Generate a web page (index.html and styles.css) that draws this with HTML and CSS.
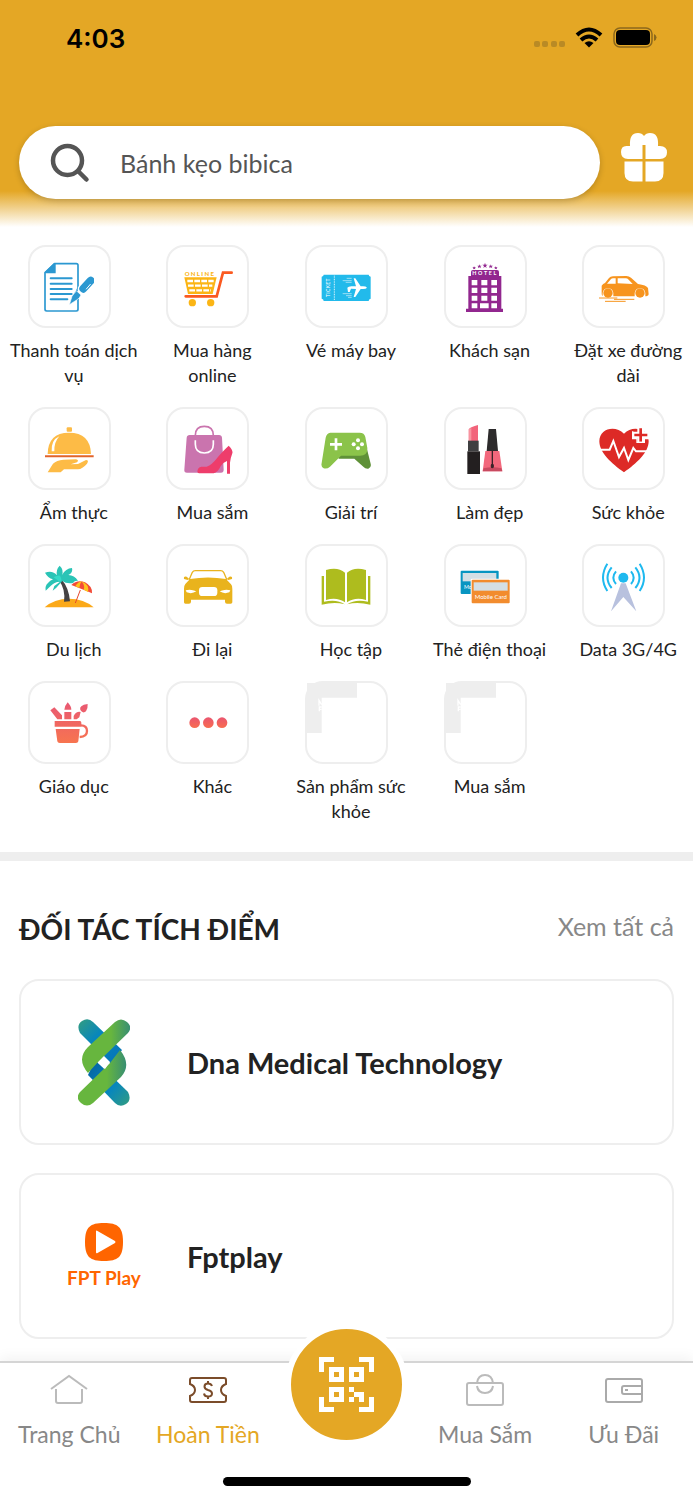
FILE: index.html
```html
<!DOCTYPE html>
<html lang="vi">

<head>
    <meta charset="UTF-8">
    <meta name="viewport" content="width=device-width, initial-scale=1.0">
    <title>Hoàn Tiền</title>
    <link rel="stylesheet" href="styles.css">
</head>

<body>
    <header class="header">
        <div class="status-bar">
            <span class="time">4:03</span>
            <svg class="status-icons" width="124" height="24" viewBox="0 0 124 24">
                <g fill="#b98a25">
                    <rect x="1" y="15" width="6" height="6" rx="2" />
                    <rect x="9" y="15" width="6" height="6" rx="2" />
                    <rect x="18" y="15" width="6" height="6" rx="2" />
                    <rect x="26" y="15" width="6" height="6" rx="2" />
                </g>
                <g fill="none" stroke="#000" stroke-width="4">
                    <path d="M44 9Q56 -2 68 9" />
                    <path d="M48 14Q56 7 64 14" />
                </g>
                <path d="M56 21.500L51.500 17Q56 13.500 60.500 17Z" />
                <rect x="81" y="2" width="38" height="19" rx="6" fill="none" stroke="#8c681c" stroke-width="1.500" />
                <rect x="83" y="4" width="34" height="15" rx="4" />
                <path d="M121 8Q123.500 9 123.500 11.500T121 15Z" fill="#8c681c" />
            </svg>
        </div>
        <form class="search-row">
            <label class="search-box">
                <svg width="40" height="40" viewBox="0 0 40 40" fill="none" stroke="#555" stroke-width="4.500" stroke-linecap="round">
                    <circle cx="17.500" cy="17.500" r="14.500" />
                    <path d="M28 28L36.500 36.500" />
                </svg>
                <input type="search" aria-label="Tìm kiếm" placeholder="Bánh kẹo bibica">
            </label>
            <button type="button" class="gift-btn" aria-label="Quà tặng">
                <svg width="46" height="49" viewBox="0 0 46 49" fill="#fff">
                    <path d="M21.500 12V26H7Q0 26 0 19T7 13H9Q8 0 17 0Q21 0 23 3Q25 0 29 0Q38 0 37 13H39Q46 13 46 19.500T39 26H24.500V12Z" />
                    <path d="M3.500 28.500H21.500V48.500H12Q3.500 48.500 3.500 40Z" />
                    <path d="M24.500 28.500H42.500V40Q42.500 48.500 34 48.500H24.500Z" />
                </svg>
            </button>
        </form>
    </header>

    <main>
        <nav class="categories" aria-label="Danh mục">
            <a href="#" class="category">
                <span class="category-icon">
                    <svg viewBox="0 0 150 150">
                        <path d="M32 5H97Q102 5 102 10V78L88 110L102 103V142Q102 147 97 147H8Q3 147 3 142V32Z" fill="#fff" stroke="#2b98d1" stroke-width="5" />
                        <path d="M3 34V30L30 3H35V34Z" fill="#2b98d1" />
                        <path d="M20 49H83M20 65H83M20 81H83M20 96H83M20 112H70" stroke="#2b98d1" stroke-width="6" stroke-linecap="round" />
                        <path d="M118 82L138 58" stroke="#fff" stroke-width="34" stroke-linecap="round" />
                        <path d="M118 80L140 56" stroke="#2b98d1" stroke-width="24" stroke-linecap="round" />
                        <path d="M76 128L84 103Q92 90 98 87L111 99Q107 109 98 114Z" fill="#2b98d1" stroke="#fff" stroke-width="2" />
                        <path d="M127 81L139 67" stroke="#fff" stroke-width="3" stroke-linecap="round" />
                    </svg>
                </span>
                <span class="category-name">Thanh toán dịch vụ</span>
            </a>
            <a href="#" class="category">
                <span class="category-icon">
                    <svg viewBox="0 0 150 150">
                        <text class="icon-text" x="5" y="43" font-size="18" font-weight="900" letter-spacing="4" fill="#fbb515">ONLINE</text>
                        <path d="M4 46H101L89 96H15Z" fill="#fbb515" />
                        <path d="M13 57H92M15 71H88M19 85H84" stroke="#fff" stroke-width="7" stroke-dasharray="17 4" />
                        <path d="M146 32H120L101 103H8" fill="none" stroke="#fb5a20" stroke-width="8" stroke-linecap="round" />
                        <circle cx="28" cy="122" r="11" fill="#fbb515" />
                        <circle cx="83" cy="122" r="11" fill="#fbb515" />
                    </svg>
                </span>
                <span class="category-name">Mua hàng online</span>
            </a>
            <a href="#" class="category">
                <span class="category-icon">
                    <svg viewBox="0 0 150 150">
                        <path d="M8 38H143Q143 43 149 44V110Q143 111 143 117H8Q8 111 2 110V44Q8 43 8 38Z" fill="#22baeb" />
                        <path d="M40 41V115" stroke="#fff" stroke-width="2.500" stroke-dasharray="3 2" />
                        <text class="icon-text" x="-105" y="28" transform="rotate(-90)" font-size="15" fill="#fff" letter-spacing="1">TICKET</text>
                        <path d="M79 77Q83 71 98 73L105 73L98 49H103L119 73H126Q135 73 138 77Q135 81 126 81H119L103 105H98L105 81L90 80L86 90H81Z" fill="#fff" />
                        <path d="M77 49H92M65 56H92M74 61H92M65 95H92M75 101H92M81 106H92" stroke="#d6f2fc" stroke-width="2" />
                    </svg>
                </span>
                <span class="category-name">Vé máy bay</span>
            </a>
            <a href="#" class="category">
                <span class="category-icon">
                    <svg viewBox="0 0 150 150">
                        <g fill="#92278f">
                            <path d="M75 2L77 8H83L78 12L80 18L75 14L70 18L72 12L67 8H73ZM58 7L60 11H65L61 14L63 19L58 16L54 19L55 14L52 11H57ZM92 7L94 11H99L95 14L97 19L92 16L88 19L89 14L86 11H91ZM42 13L44 16H48L45 18L46 22L42 20L39 22L40 18L37 16H41ZM107 13L109 16H113L110 18L111 22L107 20L104 22L105 18L102 16H106Z" />
                            <path d="M39 24H111Q117 24 117 30V42H124V140H129V150H18V140H25V42H33V30Q33 24 39 24Z" />
                        </g>
                        <text class="icon-text" x="37" y="40" font-size="16" font-weight="700" letter-spacing="5" fill="#fff">HOTEL</text>
                        <path d="M35 54H52V70H35ZM64 54H82V70H64ZM94 54H111V70H94ZM35 77H52V93H35ZM64 77H82V93H64ZM94 77H111V93H94ZM35 101H52V116H35ZM64 101H82V116H64ZM94 101H111V116H94ZM35 124H52V139H35ZM60 124H86V139H60ZM94 124H111V139H94Z" fill="#fff" />
                    </svg>
                </span>
                <span class="category-name">Khách sạn</span>
            </a>
            <a href="#" class="category">
                <span class="category-icon">
                    <svg viewBox="0 0 150 150">
                        <path d="M8 71Q12 65 18 63L30 48Q34 43 42 43L82 42Q90 42 96 47L117 66Q142 69 147 78L149 97Q149 102 142 103H20Q8 104 8 95Z" fill="#f7941e" />
                        <path d="M24 65L36 51Q38 49 42 49H50V65ZM56 49H80Q85 49 89 53L101 66L56 64Z" fill="#fff" />
                        <path d="M11 94A16 16 0 0 1 43 94V106H11ZM107 94A16 16 0 0 1 139 94V106H107Z" fill="#fff" />
                        <circle cx="27" cy="93" r="14" fill="#f7941e" />
                        <circle cx="123" cy="93" r="14" fill="#f7941e" />
                        <path d="M0 108H55M45 112H106M18 118H80" stroke="#f7941e" stroke-width="3" />
                    </svg>
                </span>
                <span class="category-name">Đặt xe đường dài</span>
            </a>
            <a href="#" class="category">
                <span class="category-icon">
                    <svg viewBox="0 0 150 150">
                        <rect x="68" y="10" width="16" height="13" rx="3" fill="#fdbb46" />
                        <path d="M11 90Q12 26 75 26Q139 26 141 90Z" fill="#fdbb46" />
                        <path d="M23 82Q21 48 46 37Q30 54 31 82Z" fill="#fff" />
                        <path d="M3 97H149" stroke="#e2642b" stroke-width="6" />
                        <path d="M11 145L27 119Q38 108 58 107L96 106Q106 108 99 115L80 121L102 120L126 108Q136 108 129 119Q115 135 102 136H60L50 145Z" fill="#fdbb46" />
                    </svg>
                </span>
                <span class="category-name">Ẩm thực</span>
            </a>
            <a href="#" class="category">
                <span class="category-icon">
                    <svg viewBox="0 0 150 150">
                        <path d="M20 33H108Q116 33 117 41L122 137Q122 146 114 146H12Q3 146 4 137L11 41Q12 33 20 33Z" fill="#ca74ae" />
                        <path d="M37 34Q37 7 64 7T91 34" fill="none" stroke="#ca74ae" stroke-width="5" />
                        <path d="M37 49V61Q37 87 64 87T91 61V49" fill="none" stroke="#fff" stroke-width="5" />
                        <path d="M43 142Q44 130 55 128H71Q87 122 103 101Q115 86 137 65Q151 79 148 88Q142 104 141 116V149H132V111Q120 115 113 127Q104 146 92 148H48Q43 148 43 142Z" fill="#ee3d6b" />
                    </svg>
                </span>
                <span class="category-name">Mua sắm</span>
            </a>
            <a href="#" class="category">
                <span class="category-icon">
                    <svg viewBox="0 0 150 150">
                        <path d="M50 92L132 51L149 119Q152 131 142 134Q133 135 127 128L100 104H53Z" fill="#5f9138" />
                        <path d="M28 26H116Q130 26 133 39L139 72Q140 95 117 95H60L27 128Q18 136 8 133Q-1 129 2 117L14 41Q17 27 28 26Z" fill="#8bc34a" />
                        <path d="M27 61H63M45 43V79" stroke="#fff" stroke-width="8" />
                        <g fill="#fff">
                            <circle cx="111" cy="49" r="6" />
                            <circle cx="98" cy="61" r="6" />
                            <circle cx="123" cy="61" r="6" />
                            <circle cx="111" cy="73" r="6" />
                        </g>
                    </svg>
                </span>
                <span class="category-name">Giải trí</span>
            </a>
            <a href="#" class="category">
                <span class="category-icon">
                    <svg viewBox="0 0 150 150">
                        <path d="M26 16Q32 8 54 3V52H26Z" fill="#f2647b" />
                        <path d="M27 16V52H34V12Z" fill="#f8949f" />
                        <path d="M24 50H56V82H24Z" fill="#3f3f41" />
                        <path d="M22 82H60V150H22Z" fill="#231f20" />
                        <path d="M86 15H108L114 81H80Z" fill="#2d2b2c" />
                        <path d="M76 81H118L127 142H68Z" fill="#f2687c" />
                        <path d="M71 133Q98 127 124 133L127 142H68Z" fill="#c84a60" />
                        <path d="M97 80V129" stroke="#3b2328" stroke-width="4" />
                        <ellipse cx="97" cy="126" rx="5" ry="7" fill="#3b2328" />
                    </svg>
                </span>
                <span class="category-name">Làm đẹp</span>
            </a>
            <a href="#" class="category">
                <span class="category-icon">
                    <svg viewBox="0 0 150 150">
                        <path d="M75 145C38 119 1 86 1 52C1 13 49 2 75 29C101 2 149 14 149 52C149 86 112 119 75 145Z" fill="#dd2a26" />
                        <path d="M3 77H32L43 51L60 99L75 72L88 108L103 72L111 82H144" fill="none" stroke="#fff" stroke-width="6" />
                        <path d="M125 10V57M101 33H150" stroke="#fff" stroke-width="20" />
                        <path d="M125 13V53M106 33H145" stroke="#dd2a26" stroke-width="8" />
                        <path d="M101 22V44H114V55H136V44H150" fill="none" stroke="#fff" stroke-width="4" />
                    </svg>
                </span>
                <span class="category-name">Sức khỏe</span>
            </a>
            <a href="#" class="category">
                <span class="category-icon">
                    <svg viewBox="0 0 150 150">
                        <path d="M2 139Q30 113 75 113T149 139Z" fill="#fba919" />
                        <path d="M60 122Q65 85 46 60L54 57Q74 79 78 121Z" fill="#454243" />
                        <path d="M48 62Q30 62 19 76L5 89Q2 75 12 66Q18 58 27 55Q11 50 3 35Q26 27 39 43Q35 26 47 14Q60 26 54 42Q65 22 84 21Q88 35 73 42Q91 43 102 59Q91 58 87 66Q67 69 55 60L37 80L26 89L31 75Z" fill="#2ac4b6" />
                        <path d="M48 44Q57 61 47 62L29 49Q40 42 48 44Z" fill="#34dac8" />
                        <path d="M109 87L94 126" stroke="#e5472d" stroke-width="3" />
                        <path d="M82 72Q100 55 123 64Q146 76 144 97Q121 87 82 72Z" fill="#f34b38" />
                        <path d="M94 76Q102 62 113 61Q106 70 106 81ZM119 86Q124 76 113 61Q137 71 132 93Z" fill="#ffc21c" />
                    </svg>
                </span>
                <span class="category-name">Du lịch</span>
            </a>
            <a href="#" class="category">
                <span class="category-icon">
                    <svg viewBox="0 0 150 150">
                        <path d="M18 57L28 34Q31 29 37 29H113Q119 29 122 34L132 57" fill="none" stroke="#e9b31d" stroke-width="4" />
                        <path d="M21 54Q75 45 129 54L144 70Q149 75 148 84V124Q148 128 143 128H132Q126 128 126 122V116H24V122Q24 128 18 128H7Q3 128 3 124V84Q2 75 7 69Z" fill="#e9b31d" />
                        <path d="M3 54Q1 45 11 47L18 53L14 57ZM147 54Q149 45 139 47L132 53L136 57Z" fill="#e9b31d" />
                        <rect x="48" y="78" width="55" height="27" rx="10" fill="#fff" />
                        <path d="M8 88Q23 83 40 91Q27 100 11 94ZM142 88Q127 83 110 91Q123 100 139 94Z" fill="#fff" />
                    </svg>
                </span>
                <span class="category-name">Đi lại</span>
            </a>
            <a href="#" class="category">
                <span class="category-icon">
                    <svg viewBox="0 0 150 150">
                        <path d="M15 27Q50 16 72 35V124Q48 107 15 117ZM135 27Q100 16 78 35V124Q102 107 135 117Z" fill="#aebc1e" />
                        <path d="M2 45H9V122Q48 113 71 130Q41 122 2 131ZM148 45H141V122Q102 113 79 130Q109 122 148 131Z" fill="#aebc1e" />
                    </svg>
                </span>
                <span class="category-name">Học tập</span>
            </a>
            <a href="#" class="category">
                <span class="category-icon">
                    <svg viewBox="0 0 150 150">
                        <rect x="2" y="29" width="114" height="70" rx="3" fill="#0895c1" />
                        <rect x="8" y="36" width="101" height="25" fill="#d4dfe5" />
                        <text class="icon-text" x="12" y="85" font-size="16" fill="#fff">Mobile</text>
                        <rect x="32" y="53" width="119" height="77" rx="4" fill="#fff" />
                        <rect x="35" y="56" width="114" height="71" rx="3" fill="#f28c2e" />
                        <rect x="41" y="64" width="102" height="25" fill="#d4dfe5" />
                        <text class="icon-text" x="44" y="113" font-size="18" fill="#fff">Mobile Card</text>
                    </svg>
                </span>
                <span class="category-name">Thẻ điện thoại</span>
            </a>
            <a href="#" class="category">
                <span class="category-icon">
                    <svg viewBox="0 0 150 150">
                        <circle cx="73" cy="50" r="15" fill="#1eb9ef" />
                        <g fill="none" stroke="#1eb9ef" stroke-width="6">
                            <path d="M51 31Q35 50 51 69M38 19Q13 50 38 81M25 8Q-1 50 25 90" />
                            <path d="M96 31Q112 50 96 69M109 19Q134 50 109 81M122 8Q148 50 122 90" />
                        </g>
                        <path d="M66 67H80L112 151L73 108L36 151Z" fill="#b8c1de" />
                    </svg>
                </span>
                <span class="category-name">Data 3G/4G</span>
            </a>
            <a href="#" class="category">
                <span class="category-icon">
                    <svg viewBox="0 0 150 150">
                        <defs>
                            <linearGradient id="coral" x1="0" y1="0" x2="0" y2="150" gradientUnits="userSpaceOnUse">
                                <stop offset="0" stop-color="#e75577" />
                                <stop offset="1" stop-color="#f9784b" />
                            </linearGradient>
                        </defs>
                        <g fill="url(#coral)">
                            <path d="M32 69H108Q112 69 112 74V86H32ZM35 93H107L103 130Q102 135 96 135H47Q41 135 40 130Z" />
                            <path d="M61 42H82V64H61ZM61 35Q61 25 71 13Q82 25 82 35ZM19 37L31 28L54 52V64H40ZM89 54Q97 39 110 42L106 58L98 64H89ZM109 36Q104 22 131 18Q132 31 126 40Q117 48 109 36Z" />
                        </g>
                        <path d="M111 82Q129 82 129 99T107 117" fill="none" stroke="url(#coral)" stroke-width="7" />
                    </svg>
                </span>
                <span class="category-name">Giáo dục</span>
            </a>
            <a href="#" class="category">
                <span class="category-icon">
                    <svg viewBox="0 0 150 150">
                        <defs>
                            <linearGradient id="dot" x1="0" y1="0" x2="0" y2="1">
                                <stop offset="0" stop-color="#ea556f" />
                                <stop offset="1" stop-color="#f86d50" />
                            </linearGradient>
                        </defs>
                        <g fill="url(#dot)">
                            <circle cx="35" cy="74" r="16" />
                            <circle cx="76" cy="74" r="16" />
                            <circle cx="117" cy="74" r="16" />
                        </g>
                    </svg>
                </span>
                <span class="category-name">Khác</span>
            </a>
            <a href="#" class="category">
                <span class="category-icon no-photo">
                    <svg viewBox="0 0 150 150">
                        <path d="M0 0H150V44H44V150H0Z" fill="#eee" />
                        <path d="M36 68V52L44 65M37 85V72H44M37 79H44" fill="none" stroke="#fff" stroke-width="4" />
                    </svg>
                </span>
                <span class="category-name">Sản phẩm sức khỏe</span>
            </a>
            <a href="#" class="category">
                <span class="category-icon no-photo">
                    <svg viewBox="0 0 150 150">
                        <path d="M0 0H150V44H44V150H0Z" fill="#eee" />
                        <path d="M36 68V52L44 65M37 85V72H44M37 79H44" fill="none" stroke="#fff" stroke-width="4" />
                    </svg>
                </span>
                <span class="category-name">Mua sắm</span>
            </a>
        </nav>

        <section class="partners">
            <div class="section-head">
                <h2>ĐỐI TÁC TÍCH ĐIỂM</h2>
                <a href="#">Xem tất cả</a>
            </div>
            <a href="#" class="partner">
                <span class="partner-logo">
                    <svg width="52" height="87" viewBox="0 0 52 87">
                        <defs>
                            <linearGradient id="blueTop" x1="0" y1="0" x2="1" y2="1">
                                <stop offset="0" stop-color="#339d80" />
                                <stop offset="0.400" stop-color="#0786bd" />
                                <stop offset="1" stop-color="#0571b8" />
                            </linearGradient>
                            <linearGradient id="blueBottom" x1="1" y1="1" x2="0" y2="0">
                                <stop offset="0" stop-color="#339d80" />
                                <stop offset="0.400" stop-color="#0786bd" />
                                <stop offset="1" stop-color="#04609f" />
                            </linearGradient>
                            <linearGradient id="greenStrand" x1="0" y1="0" x2="1" y2="0">
                                <stop offset="0.600" stop-color="#67b63e" />
                                <stop offset="1" stop-color="#388f72" />
                            </linearGradient>
                        </defs>
                        <path d="M2 14Q-2 6 4 2T15 3L44 31L34 46Z" fill="url(#blueTop)" />
                        <path d="M50 73Q54 81 48 85T37 84L10 56L17 41Z" fill="url(#blueBottom)" />
                        <path d="M37 3Q43 -2 49 3T50 14L20 43L10 54Q-2 40 10 28Z" fill="url(#greenStrand)" />
                        <path d="M42 31Q54 46 43 58L15 84Q9 89 3 84T2 73L32 44Z" fill="url(#greenStrand)" />
                        <path d="M26 37L32 43L27 50L20 44Z" fill="#fff" />
                    </svg>
                </span>
                <span class="partner-name">Dna Medical Technology</span>
            </a>
            <a href="#" class="partner">
                <span class="partner-logo fpt">
                    <svg width="38" height="38" viewBox="0 0 38 38">
                        <path d="M19 0C33 0 38 4 38 19S33 38 19 38S0 34 0 19S5 0 19 0Z" fill="#ff6500" />
                        <path d="M11 8.500Q11 7 12.500 8L30 18Q31 19 30 20L12.500 30Q11 31 11 29Z" fill="#fff" />
                    </svg>
                    <span>FPT Play</span>
                </span>
                <span class="partner-name">Fptplay</span>
            </a>
        </section>
    </main>

    <nav class="tab-bar" aria-label="Điều hướng">
        <a href="#" class="tab">
            <svg width="38" height="30" viewBox="0 0 38 30" fill="none" stroke="#bbb" stroke-width="2">
                <path d="M1 14L19 1L37 14M6 14V26Q6 28 8 28H30Q32 28 32 26V14" />
            </svg>
            <span>Trang Chủ</span>
        </a>
        <a href="#" class="tab active" aria-current="page">
            <svg width="38" height="30" viewBox="0 0 38 30" fill="none" stroke="#7b4c2a" stroke-width="2">
                <path d="M3 3H35Q37 3 37 5V9Q32 11 32 15T37 21V25Q37 27 35 27H3Q1 27 1 25V21Q6 19 6 15T1 9V5Q1 3 3 3Z" />
                <path d="M23 11Q22 8.500 19 8.500Q15.500 8.500 15.500 11.500Q15.500 14 19 15Q23 16 23 18.500Q23 21.500 19 21.500Q15.500 21.500 15 18.500M19 8V6M19 24V22" />
            </svg>
            <span>Hoàn Tiền</span>
        </a>
        <button type="button" class="scan-btn" aria-label="Quét mã QR">
            <svg width="55" height="55" viewBox="0 0 11 11" fill="#fff" shape-rendering="crispEdges">
                <path d="M0 0H3V1H1V3H0ZM8 0H11V3H10V1H8ZM0 8H1V10H3V11H0ZM10 8H11V11H8V10H10Z" />
                <path fill-rule="evenodd" d="M2 2H5V5H2ZM3 3V4H4V3ZM6 2H9V5H6ZM7 3V4H8V3ZM2 6H5V9H2ZM3 7V8H4V7Z" />
                <path d="M6 6H7V7H9V9H8V8H7V7H6ZM6 8H7V9H6Z" />
            </svg>
        </button>
        <a href="#" class="tab">
            <svg width="38" height="30" viewBox="0 0 38 30" fill="none" stroke="#bbb" stroke-width="2">
                <rect x="1" y="8" width="36" height="22" rx="2" />
                <path d="M11 8Q12 0 19 0T27 8M11 11Q12 18 19 18T27 11" />
            </svg>
            <span>Mua Sắm</span>
        </a>
        <a href="#" class="tab">
            <svg width="38" height="30" viewBox="0 0 38 30" fill="none" stroke="#aaa" stroke-width="2">
                <rect x="1" y="4" width="36" height="23" rx="2" />
                <path d="M37 11H19Q17 11 17 13V17Q17 19 19 19H37M20 15H23" />
            </svg>
            <span>Ưu Đãi</span>
        </a>
        <div class="home-indicator"></div>
    </nav>
</body>

</html>
```
FILE: styles.css
```css
* {
    margin: 0;
    padding: 0;
    box-sizing: border-box;
}

body {
    font-family: Lato, "Open Sans", sans-serif;
    background: #fff;
    color: #222;
    min-height: 100vh;
    display: flex;
    flex-direction: column;
}

a {
    color: inherit;
    text-decoration: none;
}

button {
    border: none;
    background: none;
    cursor: pointer;
}

main {
    flex: 1;
}

/* Header */
.header {
    padding: 0 26px 28px 19px;
    background: linear-gradient(#e4a725 calc(100% - 36px), #fff);
}

.status-bar {
    display: flex;
    align-items: center;
    justify-content: space-between;
    height: 126px;
    padding: 0 10px 50px 47px;
}

.time {
    font-family: Inter, sans-serif;
    font-size: 26px;
    font-weight: 600;
    color: #000;
}

.search-row {
    display: flex;
    align-items: center;
    gap: 21px;
}

.search-box {
    flex: 1;
    min-width: 0;
    height: 73px;
    display: flex;
    align-items: center;
    gap: 30px;
    padding: 0 31px;
    background: #fff;
    border-radius: 37px;
    box-shadow: 0 2px 6px rgba(0, 0, 0, 0.2);
}

.search-box input {
    flex: 1;
    min-width: 0;
    border: none;
    outline: none;
    background: none;
    font: inherit;
    font-size: 25px;
}

.search-box input::placeholder {
    color: #555;
    opacity: 1;
}

.gift-btn {
    display: flex;
    padding-bottom: 10px;
}

/* Categories */
.categories {
    display: grid;
    grid-template-columns: repeat(5, 1fr);
    row-gap: 19px;
    padding: 18px 0 28px;
}

.category {
    display: flex;
    flex-direction: column;
    align-items: center;
    gap: 10px;
}

.category-icon {
    width: 83px;
    height: 83px;
    display: flex;
    align-items: center;
    justify-content: center;
    border: 2px solid #eee;
    border-radius: 18px;
}

.category-icon svg {
    width: 50px;
    height: 50px;
}

.no-photo {
    align-items: flex-start;
    justify-content: flex-start;
}

.icon-text {
    font-family: Lato, sans-serif;
}

.category-name {
    width: 100%;
    padding-left: 9px;
    font-size: 18px;
    line-height: 25px;
    text-align: center;
}

/* Partners */
.partners {
    border-top: 9px solid #eee;
    padding: 44px 19px 22px;
}

.section-head {
    display: flex;
    align-items: flex-start;
    justify-content: space-between;
    margin-bottom: 26px;
}

.section-head h2 {
    font-size: 28px;
    line-height: 48px;
}

.section-head a {
    font-size: 25px;
    line-height: 42px;
    color: #888;
}

.partner {
    display: flex;
    align-items: center;
    min-height: 166px;
    border: 2px solid #eee;
    border-radius: 20px;
}

.partner + .partner {
    margin-top: 28px;
}

.partner-logo {
    width: 166px;
    display: flex;
    flex-direction: column;
    align-items: center;
}

.fpt {
    padding-top: 6px;
    font-size: 19px;
    line-height: 34px;
    font-weight: 700;
    color: #ff6500;
}

.partner-name {
    font-size: 29px;
    font-weight: 700;
}

/* Tab bar */
.tab-bar {
    position: sticky;
    bottom: 0;
    display: grid;
    grid-template-columns: repeat(5, 1fr);
    height: 139px;
    background: #fff;
    border-top: 2px solid #d5d5d5;
    box-shadow: 0 -4px 12px rgba(0, 0, 0, 0.05);
}

.tab {
    display: flex;
    flex-direction: column;
    align-items: center;
    gap: 13px;
    padding-top: 12px;
    font-size: 23px;
    line-height: 32px;
    color: #888;
}

.tab svg {
    overflow: visible;
}

.active {
    color: #e4a725;
}

.scan-btn {
    justify-self: center;
    width: 123px;
    height: 123px;
    margin-top: -40px;
    display: flex;
    align-items: center;
    justify-content: center;
    border: 6px solid #fff;
    border-radius: 50%;
    background: #e4a725;
}

.home-indicator {
    position: absolute;
    bottom: 14px;
    left: 50%;
    width: 248px;
    height: 9px;
    margin-left: -124px;
    border-radius: 5px;
    background: #000;
}
```
